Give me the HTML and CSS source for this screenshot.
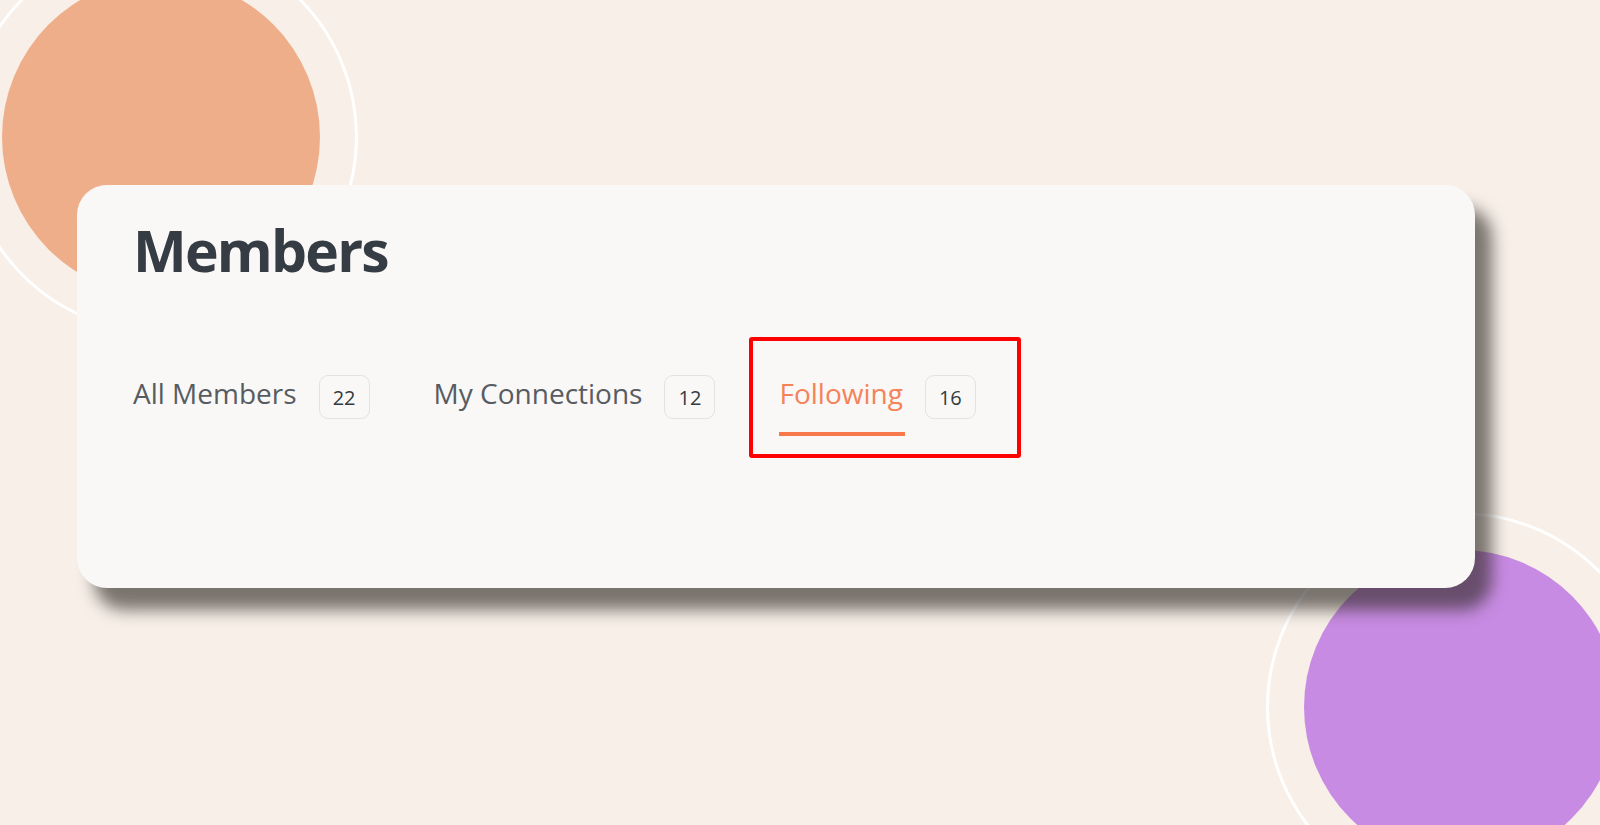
FILE: index.html
```html
<!DOCTYPE html>
<html lang="en">
<head>
<meta charset="utf-8">
<title>Members</title>
<link rel="stylesheet" href="styles.css">
</head>
<body>
<div class="backdrop">
  <div class="ring ring-orange"></div>
  <div class="blob blob-orange"></div>
  <div class="ring ring-purple"></div>
  <div class="blob blob-purple"></div>
</div>
<main class="stage">
  <section class="card">
    <h1 class="title">Members</h1>
    <nav class="tabs">
      <div class="tab">
        <span class="tab-label">All Members</span>
        <span class="count">22</span>
      </div>
      <div class="tab">
        <span class="tab-label">My Connections</span>
        <span class="count">12</span>
      </div>
      <div class="tab tab-active">
        <span class="tab-label">Following</span>
        <span class="count">16</span>
      </div>
    </nav>
  </section>
</main>
</body>
</html>
```
FILE: styles.css
```css
html, body {
  margin: 0;
  padding: 0;
}
body {
  width: 1600px;
  height: 825px;
  overflow: hidden;
  background: #f7efe8;
  font-family: "Open Sans", "Noto Sans", sans-serif;
  position: relative;
}
.backdrop {
  position: absolute;
  inset: 0;
  overflow: hidden;
}
.blob, .ring {
  position: absolute;
  border-radius: 50%;
  box-sizing: border-box;
}
.blob-orange {
  left: 2px;
  top: -22px;
  width: 318px;
  height: 318px;
  background: #efae8a;
}
.ring-orange {
  left: -36px;
  top: -60px;
  width: 394px;
  height: 394px;
  border: 3px solid #ffffff;
}
.blob-purple {
  left: 1304px;
  top: 550px;
  width: 314px;
  height: 314px;
  background: #c88be3;
}
.ring-purple {
  left: 1266px;
  top: 512px;
  width: 390px;
  height: 390px;
  border: 3px solid #ffffff;
}
.stage {
  position: relative;
  padding: 185px 0 0 77px;
}
.card {
  width: 1398px;
  height: 403px;
  box-sizing: border-box;
  background: #f9f8f6;
  border-radius: 30px;
  box-shadow: 17px 22px 16px rgba(45, 40, 36, 0.62);
  padding: 37px 0 0 56px;
}
.title {
  margin: 0;
  font-size: 57px;
  line-height: 57px;
  font-weight: 700;
  color: #353c44;
  letter-spacing: -1.8px;
}
.tabs {
  display: flex;
  align-items: flex-start;
  gap: 64px;
  margin-top: 94px;
}
.tab {
  position: relative;
  display: flex;
  align-items: flex-start;
  gap: 22px;
}
.tab-label {
  font-size: 28px;
  line-height: 40px;
  color: #575c63;
}
.count {
  width: 51px;
  height: 44px;
  box-sizing: border-box;
  border: 1.5px solid #e5e2de;
  border-radius: 9px;
  display: flex;
  align-items: center;
  justify-content: center;
  font-size: 20px;
  font-weight: 500;
  color: #343a41;
  margin-top: 2px;
}
.tab-active .tab-label {
  color: #f5835a;
  position: relative;
}
.tab-active .tab-label::after {
  content: "";
  position: absolute;
  left: 0;
  right: -2px;
  top: 59px;
  height: 4px;
  background: #f7784a;
}
.tab-active::before {
  content: "";
  position: absolute;
  left: -30px;
  right: -45px;
  top: -36px;
  height: 121px;
  box-sizing: border-box;
  border: 4px solid #ff0000;
  border-radius: 3px;
}
```
